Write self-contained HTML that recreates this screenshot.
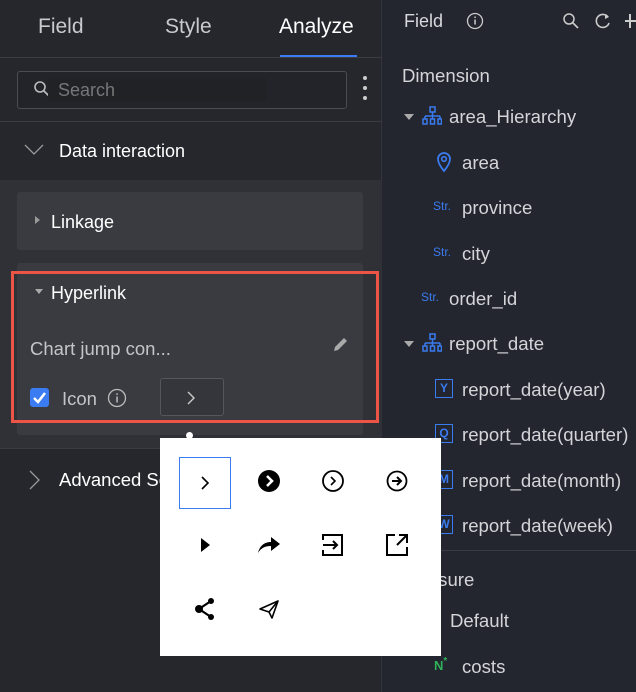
<!DOCTYPE html>
<html><head><style>
*{margin:0;padding:0;box-sizing:border-box}
body{width:636px;height:692px;overflow:hidden;background:#23252f;font-family:"Liberation Sans",sans-serif;position:relative;color:#d8d9dc}
.a{position:absolute;white-space:nowrap}
.left{position:absolute;left:0;top:0;width:382px;height:692px;background:#25272d;border-right:1px solid #34363e}
.tab{font-size:21px;top:15px;color:#c9cacd}
.ri{font-size:18.6px;color:#d4d5d8}
.str{font-size:12px;color:#3a7cf0}
.cell{position:absolute;width:52px;height:52px;display:flex;align-items:center;justify-content:center}
</style></head><body>
<div class="left">
 <div class="a tab" style="left:38px">Field</div>
 <div class="a tab" style="left:165px">Style</div>
 <div class="a tab" style="left:279px;color:#fff">Analyze</div>
 <div class="a" style="left:280px;top:55px;width:77px;height:3px;background:#3b7cf2"></div>
 <div class="a" style="left:0;top:57px;width:382px;height:1px;background:#3a3c43"></div>
 <div class="a" style="left:17px;top:71px;width:330px;height:38px;border:1px solid #4a4c53;border-radius:3px;background:#222429"></div>
 <svg class="a" style="left:33px;top:80px" width="18" height="18" viewBox="0 0 18 18"><circle cx="7" cy="7" r="5" fill="none" stroke="#bbb" stroke-width="1.6"/><path d="M11 11l5 5" stroke="#bbb" stroke-width="1.8"/></svg>
 <div class="a" style="left:48px;top:78px;width:219px;height:23px;background:#202226"></div>
 <div class="a" style="left:58px;top:80px;font-size:18px;color:#777">Search</div>
 <div class="a" style="left:363px;top:76px;width:4px;height:4px;border-radius:2px;background:#ccc;box-shadow:0 10px 0 #ccc,0 20px 0 #ccc"></div>
 <div class="a" style="left:0;top:121px;width:382px;height:1px;background:#3a3c43"></div>
 <svg class="a" style="left:24px;top:144px" width="20" height="12"><path d="M1 1l9 9 9-9" fill="none" stroke="#999" stroke-width="1.3"/></svg>
 <div class="a" style="left:59px;top:141px;font-size:18px;color:#fff">Data interaction</div>
 <div class="a" style="left:0;top:180px;width:382px;height:268px;background:#2f3136"></div>
 <div class="a" style="left:17px;top:192px;width:346px;height:58px;background:#393b40;border-radius:3px"></div>
 <div class="a" style="left:35px;top:216px;border-left:5px solid #999;border-top:4px solid transparent;border-bottom:4px solid transparent"></div>
 <div class="a" style="left:51px;top:212px;font-size:18px;color:#fff">Linkage</div>
 <div class="a" style="left:17px;top:263px;width:346px;height:172px;background:#393b40;border-radius:3px"></div>
 <div class="a" style="left:11px;top:271px;width:368px;height:152px;border:3px solid #ec5545"></div>
 <div class="a" style="left:35px;top:289px;border-top:5px solid #aaa;border-left:4px solid transparent;border-right:4px solid transparent"></div>
 <div class="a" style="left:51px;top:283px;font-size:18px;color:#fff">Hyperlink</div>
 <div class="a" style="left:30px;top:338px;font-size:18.5px;color:#c4c5c8">Chart jump con...</div>
 <svg class="a" style="left:332px;top:335px" width="18" height="18" viewBox="0 0 18 18"><path d="M2 16l1-4 9-9 3 3-9 9z" fill="#aaa"/></svg>
 <div class="a" style="left:30px;top:388px;width:19px;height:19px;background:#3b7cf2;border-radius:3px"></div>
 <svg class="a" style="left:31px;top:389px" width="17" height="17"><path d="M3 9l4 4 7-9" fill="none" stroke="#fff" stroke-width="2.5"/></svg>
 <div class="a" style="left:62px;top:388px;font-size:18.5px;color:#c4c5c8">Icon</div>
 <svg class="a" style="left:107px;top:388px" width="20" height="20"><circle cx="10" cy="10" r="8.5" fill="none" stroke="#bbb" stroke-width="1.3"/><rect x="9.3" y="8.5" width="1.5" height="6" fill="#bbb"/><rect x="9.3" y="5.3" width="1.5" height="1.6" fill="#bbb"/></svg>
 <div class="a" style="left:160px;top:378px;width:64px;height:38px;border:1px solid #55575d;border-radius:3px;background:#34363b"></div>
 <svg class="a" style="left:186px;top:391px" width="10" height="14"><path d="M2 1l6 6-6 6" fill="none" stroke="#ccc" stroke-width="1.4"/></svg>
 <div class="a" style="left:0;top:448px;width:382px;height:1px;background:#3a3c43"></div>
 <svg class="a" style="left:29px;top:470px" width="12" height="20"><path d="M1 1l9 9-9 9" fill="none" stroke="#999" stroke-width="1.3"/></svg>
 <div class="a" style="left:59px;top:469px;font-size:18.5px;color:#fff">Advanced Settings</div>
</div>
<!-- right panel -->
<div class="a" style="left:404px;top:11px;font-size:18px">Field</div>
<svg class="a" style="left:466px;top:12px" width="18" height="18"><circle cx="9" cy="9" r="7.5" fill="none" stroke="#ccc" stroke-width="1.3"/><rect x="8.3" y="7.5" width="1.5" height="5" fill="#ccc"/><rect x="8.3" y="4.5" width="1.5" height="1.5" fill="#ccc"/></svg>
<svg class="a" style="left:562px;top:12px" width="18" height="18"><circle cx="7" cy="7" r="5" fill="none" stroke="#ccc" stroke-width="1.5"/><path d="M11 11l5 5" stroke="#ccc" stroke-width="1.6"/></svg>
<svg class="a" style="left:594px;top:12px" width="18" height="18"><path d="M14 5a6.5 6.5 0 1 0 1 6" fill="none" stroke="#ccc" stroke-width="1.6"/><path d="M11 2l4 3-4 2" fill="#ccc"/></svg>
<div class="a" style="left:625px;top:20px;width:11px;height:1.6px;background:#ccc"></div>
<div class="a" style="left:629px;top:14px;width:1.6px;height:14px;background:#ccc"></div>
<div class="a ri" style="left:402px;top:65px">Dimension</div>
<div class="a" style="left:404px;top:114px;border-top:6px solid #aaa;border-left:5px solid transparent;border-right:5px solid transparent"></div>
<svg class="a" style="left:422px;top:106px" width="20" height="20" fill="none" stroke="#3a7cf0" stroke-width="1.5"><rect x="8" y="1" width="5" height="5"/><path d="M10.5 6v4M3 10h15M3 10v3M10.5 10v3M18 10v3"/><rect x="1" y="13" width="4" height="5"/><rect x="8.5" y="13" width="4" height="5"/><rect x="16" y="13" width="3.5" height="5"/></svg>
<div class="a ri" style="left:449px;top:106px">area_Hierarchy</div>
<svg class="a" style="left:436px;top:151px" width="16" height="22"><path d="M8 20C3 14 2 10 2 8a6 6 0 0 1 12 0c0 2-1 6-6 12z" fill="none" stroke="#3a7cf0" stroke-width="1.8"/><circle cx="8" cy="8" r="2.3" fill="none" stroke="#3a7cf0" stroke-width="1.6"/></svg>
<div class="a ri" style="left:462px;top:152px">area</div>
<div class="a str" style="left:433px;top:199px">Str.</div>
<div class="a ri" style="left:462px;top:197px">province</div>
<div class="a str" style="left:433px;top:245px">Str.</div>
<div class="a ri" style="left:462px;top:243px">city</div>
<div class="a str" style="left:421px;top:290px">Str.</div>
<div class="a ri" style="left:449px;top:288px">order_id</div>
<div class="a" style="left:404px;top:341px;border-top:6px solid #aaa;border-left:5px solid transparent;border-right:5px solid transparent"></div>
<svg class="a" style="left:422px;top:333px" width="20" height="20" fill="none" stroke="#3a7cf0" stroke-width="1.5"><rect x="8" y="1" width="5" height="5"/><path d="M10.5 6v4M3 10h15M3 10v3M10.5 10v3M18 10v3"/><rect x="1" y="13" width="4" height="5"/><rect x="8.5" y="13" width="4" height="5"/><rect x="16" y="13" width="3.5" height="5"/></svg>
<div class="a ri" style="left:449px;top:333px">report_date</div>
<div class="a" style="left:435px;top:379px;width:18px;height:19px;border:1.5px solid #3a7cf0;color:#3a7cf0;font-size:12px;font-weight:bold;text-align:center;line-height:16px">Y</div>
<div class="a ri" style="left:462px;top:379px">report_date(year)</div>
<div class="a" style="left:435px;top:424px;width:18px;height:19px;border:1.5px solid #3a7cf0;color:#3a7cf0;font-size:12px;font-weight:bold;text-align:center;line-height:16px">Q</div>
<div class="a ri" style="left:462px;top:424px">report_date(quarter)</div>
<div class="a" style="left:435px;top:470px;width:18px;height:19px;border:1.5px solid #3a7cf0;color:#3a7cf0;font-size:12px;font-weight:bold;text-align:center;line-height:16px">M</div>
<div class="a ri" style="left:462px;top:470px">report_date(month)</div>
<div class="a" style="left:435px;top:515px;width:18px;height:19px;border:1.5px solid #3a7cf0;color:#3a7cf0;font-size:12px;font-weight:bold;text-align:center;line-height:16px">W</div>
<div class="a ri" style="left:462px;top:515px">report_date(week)</div>
<div class="a" style="left:383px;top:550px;width:253px;height:1px;background:#3a3c45"></div>
<div class="a ri" style="left:402px;top:569px">Measure</div>
<div class="a ri" style="left:450px;top:610px">Default</div>
<div class="a" style="left:434px;top:656px;font-size:13px;color:#2fb15a;font-weight:bold">N<span style="font-size:10px;vertical-align:6px">*</span></div>
<div class="a ri" style="left:462px;top:656px">costs</div>
<!-- popup -->
<div class="a" style="left:160px;top:438px;width:281px;height:218px;background:#fff"></div>
<div class="a" style="left:186px;top:432px;width:7px;height:7px;border-radius:50%;background:#fff"></div>
<div class="cell" style="left:179px;top:457px;border:1px solid #3b7cf2"><svg width="12" height="16"><path d="M3 2l6 6-6 6" fill="none" stroke="#000" stroke-width="1.6"/></svg></div>
<div class="cell" style="left:243px;top:455px"><svg width="24" height="24"><circle cx="12" cy="12" r="11" fill="#000"/><path d="M10 7l5 5-5 5" fill="none" stroke="#fff" stroke-width="2.6"/></svg></div>
<div class="cell" style="left:307px;top:455px"><svg width="24" height="24"><circle cx="12" cy="12" r="10" fill="none" stroke="#000" stroke-width="1.8"/><path d="M10 8l4 4-4 4" fill="none" stroke="#000" stroke-width="1.6"/></svg></div>
<div class="cell" style="left:371px;top:455px"><svg width="24" height="24"><circle cx="12" cy="12" r="9.5" fill="none" stroke="#000" stroke-width="1.8"/><path d="M7 12h9M12 8l4 4-4 4" fill="none" stroke="#000" stroke-width="2"/></svg></div>
<div class="cell" style="left:179px;top:519px"><svg width="14" height="18"><path d="M3 2l9 7-9 7z" fill="#000"/></svg></div>
<div class="cell" style="left:243px;top:519px"><svg width="26" height="22"><path d="M2 19c2-8 7-11 13-11V3l9 7-9 7v-5c-6 0-10 2-13 7z" fill="#000"/></svg></div>
<div class="cell" style="left:307px;top:519px"><svg width="24" height="24"><path d="M2 7V2h19v20H2v-5" fill="none" stroke="#000" stroke-width="2"/><path d="M2 12h14M12 8l4 4-4 4" fill="none" stroke="#000" stroke-width="2"/></svg></div>
<div class="cell" style="left:371px;top:519px"><svg width="24" height="24"><path d="M10 2H2v20h20v-8" fill="none" stroke="#000" stroke-width="2"/><path d="M12 12l9-9M14 2h8v8" fill="none" stroke="#000" stroke-width="2"/></svg></div>
<div class="cell" style="left:179px;top:583px"><svg width="24" height="24"><path d="M18 4L6 12l12 8" fill="none" stroke="#000" stroke-width="2.2"/><circle cx="18" cy="4" r="3" fill="#000"/><circle cx="6" cy="12" r="4" fill="#000"/><circle cx="18" cy="20" r="3" fill="#000"/></svg></div>
<div class="cell" style="left:243px;top:583px"><svg width="22" height="22"><path d="M2 11L20 3l-6 17-3-6z M11 14L20 3" fill="none" stroke="#000" stroke-width="1.6" stroke-linejoin="round"/></svg></div>
</body></html>
